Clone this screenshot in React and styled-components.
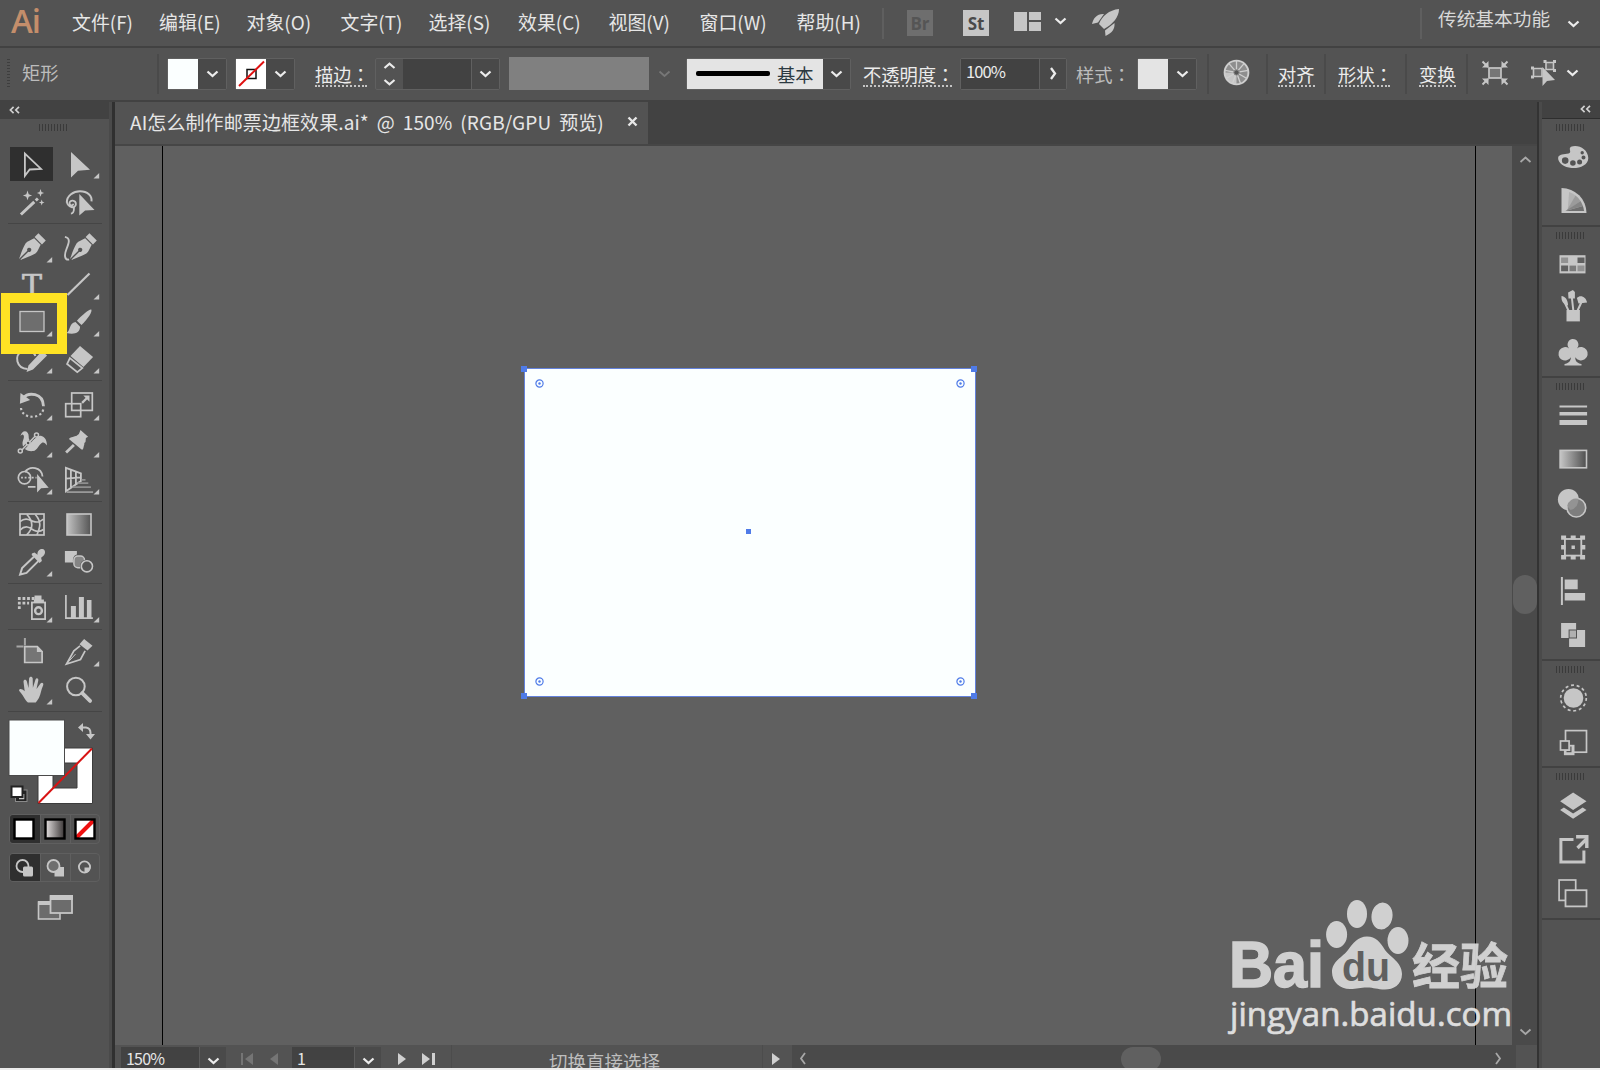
import React from "react";
import styled, { css, createGlobalStyle } from "styled-components";

const ink = "#c6c6c6";
const chrome = "#535353";
const dark = "#424242";
const blue = "#4f7be8";

const GlobalStyle = createGlobalStyle`
  * {
    box-sizing: border-box;
  }

  html, body, #root {
    margin: 0;
    padding: 0;
  }

  body {
    background: #ececec;
    font-family: "Noto Sans CJK SC", sans-serif;
    overflow: hidden;
  }

  svg {
    display: block;
    flex: none;
  }
`;

const Window = styled.div`
  position: relative;
  display: flex;
  flex-direction: column;
  width: 1600px;
  height: 1068px;
  overflow: hidden;
  background: ${chrome};
  color: #e6e6e6;
`;

/* menu bar */

const MenuBar = styled.div`
  display: flex;
  height: 48px;
  flex: none;
  border-bottom: 2px solid ${dark};
`;

const Logo = styled.div`
  width: 60px;
  padding-left: 11px;
  font: 600 33px/42px "Open Sans", sans-serif;
  letter-spacing: -1px;
  color: #c48e6b;
`;

const Menu = styled.div`
  display: flex;
  width: 822px;
  padding-left: 12px;
`;

const MenuItem = styled.div`
  width: ${(p) => p.$width}px;
  flex: none;
  font-size: 18.9px;
  line-height: 43px;
  white-space: nowrap;
`;

const MenuRule = styled.div`
  width: 2px;
  height: 31px;
  margin-top: 8px;
  background: #5f5f5f;
`;

const AppBadge = styled.div`
  width: 26px;
  height: 26px;
  margin: 10px 0 0 ${(p) => p.$gap}px;
  background: ${(p) => (p.$off ? "#6e6e6e" : "#c6c6c6")};
  color: ${(p) => (p.$off ? "#555" : "#4a4a4a")};
  font: 700 17px/27px "Open Sans", sans-serif;
  text-align: center;
`;

const MenuIcon = styled.div`
  margin: ${(p) => p.$top}px 0 0 ${(p) => p.$gap}px;
`;

const Workspace = styled.div`
  width: 130px;
  margin-left: 16px;
  font-size: 18.7px;
  line-height: 36px;
  white-space: nowrap;
  color: #d8d8d8;
`;

/* control bar */

const OptionsBar = styled.div`
  display: flex;
  align-items: center;
  height: 54px;
  flex: none;
  border-bottom: 2px solid ${dark};
`;

const SideGrip = styled.div`
  width: 3px;
  height: 30px;
  margin-left: 7px;
  background: repeating-linear-gradient(#3e3e3e 0 1px, #535353 1px 3px);
`;

const Label = styled.div`
  margin-left: ${(p) => p.$gap}px;
  width: ${(p) => p.$width}px;
  flex: none;
  height: 25px;
  margin-bottom: ${(p) => p.$raise || 0}px;
  font-size: 18.3px;
  line-height: 24px;
  white-space: nowrap;
  color: ${(p) => (p.$dim ? "#bcbcbc" : "#ececec")};
  ${(p) =>
    p.$link &&
    css`
      border-bottom: 2px dotted #c4c4c4;
    `}
`;

const Colon = styled.span`
  font-family: "Noto Sans CJK TC", sans-serif;
`;

const Rule = styled.div`
  width: 2px;
  height: 40px;
  flex: none;
  margin-left: ${(p) => p.$gap}px;
  background: #4a4a4a;
`;

const Control = styled.div`
  display: flex;
  height: 32px;
  flex: none;
  margin-left: ${(p) => p.$gap}px;
  margin-bottom: 1px;
  border: 1px solid ${(p) => (p.$plain ? "transparent" : "#606060")};
  border-radius: 2px;
`;

const Swatch = styled.div`
  width: 30px;
  height: 30px;
  background: ${(p) => p.$fill};
`;

const Arrow = styled.div`
  display: flex;
  align-items: center;
  justify-content: center;
  width: ${(p) => p.$width || 28}px;
  background: ${(p) => (p.$plain ? "transparent" : "#494949")};
  border-left: ${(p) => (p.$line ? "1px solid #606060" : "none")};
`;

const Field = styled.div`
  width: ${(p) => p.$width}px;
  padding-left: 5px;
  background: ${dark};
  font-size: 16.5px;
  line-height: 25px;
  letter-spacing: -0.9px;
  color: #ececec;
`;

const Profile = styled.div`
  width: 140px;
  height: 33px;
  margin-left: 9px;
  margin-bottom: 1px;
  background: #808080;
`;

const Brush = styled.div`
  display: flex;
  align-items: center;
  gap: 7px;
  width: 136px;
  padding-left: 9px;
  background: #e4e4e4;
  color: #2c3a42;
  font-size: 18.3px;
  white-space: nowrap;
`;

const BrushStroke = styled.div`
  width: 74px;
  height: 5px;
  border-radius: 2px;
  background: #000;
`;

/* panels */

const Body = styled.div`
  display: flex;
  flex: 1;
  min-height: 0;
`;

const ToolPanel = styled.div`
  width: 109px;
  flex: none;
`;

const PanelHead = styled.div`
  display: flex;
  align-items: center;
  height: 17px;
  padding: 0 9px 2px;
  justify-content: ${(p) => (p.$right ? "flex-end" : "flex-start")};
  border-bottom: ${(p) => (p.$right ? "1px solid #2e2e2e" : "none")};
  background: ${dark};
`;

const Grip = styled.div`
  width: 30px;
  height: 7px;
  margin: ${(p) => p.$margin};
  background: repeating-linear-gradient(90deg, #3a3a3a 0 1px, #535353 1px 3px);
`;

const Gutter = styled.div`
  width: ${(p) => (p.$right ? 5 : 6)}px;
  flex: none;
  background: #4a4a4a;
  ${(p) =>
    p.$right
      ? css`
          border-left: 2px solid #333;
        `
      : css`
          border-right: 3px solid #303030;
        `}
`;

const ToolGroup = styled.div`
  display: grid;
  grid-template-columns: 47px 47px;
  grid-auto-rows: 37px;
  row-gap: ${(p) => p.$rowGap || 0}px;
  width: 94px;
  height: ${(p) => p.$height}px;
  margin-left: 8px;
  padding-top: ${(p) => p.$top}px;
  border-bottom: 1px solid #454545;
`;

const Tool = styled.div`
  width: 47px;
  height: 37px;
  background: ${(p) =>
    p.$active
      ? "linear-gradient(#2f2f2f, #2f2f2f) 2px 2px / 43px 34px no-repeat"
      : "none"};
`;

const ToolMark = styled.div`
  position: absolute;
  left: 1px;
  top: 293px;
  width: 66px;
  height: 61px;
  border: 10px solid #ffe324;
  border-left-width: 9px;
`;

const ButtonRow = styled.div`
  display: flex;
  width: 91px;
  height: ${(p) => p.$height}px;
  margin: ${(p) => p.$top}px 0 0 9px;
  border: 1px solid #5f5f5f;
  border-radius: 4px;
  overflow: hidden;
`;

const ModeButton = styled.div`
  display: flex;
  align-items: center;
  justify-content: center;
  flex: 1;
  padding-right: ${(p) => (p.$active ? 2 : 0)}px;
  background: ${(p) => (p.$active ? "#2f2f2f" : "transparent")};

  & + & {
    border-left: 1px solid #5f5f5f;
  }
`;

const ScreenMode = styled.div`
  margin: 12px 0 0 37px;
`;

/* document */

const Main = styled.div`
  display: flex;
  flex-direction: column;
  width: 1422px;
  flex: none;
`;

const TabBar = styled.div`
  display: flex;
  height: 44px;
  flex: none;
  background: ${dark};
  border-bottom: 2px solid #464646;
`;

const Tab = styled.div`
  display: flex;
  align-items: center;
  width: 533px;
  padding: 0 10px 3px 15px;
  justify-content: space-between;
  background: ${chrome};
  font-size: 19px;
  letter-spacing: 0.1px;
  word-spacing: 3.6px;
  white-space: pre;
`;

const CanvasRow = styled.div`
  display: flex;
  flex: 1;
  min-height: 0;
`;

const Canvas = styled.div`
  position: relative;
  width: 1397px;
  padding: 0 36px 0 47px;
  background: #606060;
`;

const Artboard = styled.div`
  height: 100%;
  border: solid #000;
  border-width: 0 1px;
`;

const Shape = styled.div`
  position: absolute;
  left: 409px;
  top: 222px;
  width: 452px;
  height: 329px;
  border: 1px solid #6482dc;
  background: #fbffff;
`;

const Anchor = styled.div`
  position: absolute;
  left: ${(p) => p.$x}px;
  top: ${(p) => p.$y}px;
  width: ${(p) => p.$size || 6}px;
  height: ${(p) => p.$size || 6}px;
  background: ${blue};
`;

const CornerWidget = styled.svg`
  position: absolute;
  left: ${(p) => p.$x}px;
  top: ${(p) => p.$y}px;
`;

const Watermark = styled.svg`
  position: absolute;
  left: 1105px;
  top: 744px;
  opacity: 0.94;
`;

const VScroll = styled.div`
  display: flex;
  flex-direction: column;
  align-items: center;
  justify-content: space-between;
  width: 25px;
  padding: 10px 0 9px 1px;
  background: #4a4a4a;
`;

const VThumb = styled.div`
  width: 24px;
  height: 39px;
  margin-top: -4px;
  border-radius: 12px;
  background: #606060;
`;

const StatusBar = styled.div`
  display: flex;
  height: 23px;
  flex: none;
`;

const StatusField = styled.div`
  width: ${(p) => p.$width}px;
  height: 23px;
  margin: 2px 0 0 ${(p) => p.$gap}px;
  padding-left: 5px;
  background: ${dark};
  font-size: 16px;
  line-height: 23px;
  letter-spacing: -0.8px;
`;

const StatusArrow = styled.div`
  display: flex;
  justify-content: center;
  width: 27px;
  margin-top: 2px;
  padding-top: 10px;
  background: #4a4a4a;
  border-left: 1px solid #5c5c5c;
`;

const StatusNav = styled.div`
  margin: 7px 0 0 ${(p) => p.$gap}px;
`;

const StatusText = styled.div`
  width: 312px;
  margin-left: 15px;
  padding: 2px 5px 0 0;
  border: solid #4c4c4c;
  border-width: 0 1px;
  font-size: 18.5px;
  line-height: 28px;
  text-align: center;
  white-space: nowrap;
  color: #bdbdbd;
`;

const HScroll = styled.div`
  display: flex;
  align-items: center;
  justify-content: space-between;
  width: 724px;
  margin-left: 9px;
  padding: 3px 14px 0 7px;
  background: #4a4a4a;
`;

const HThumb = styled.div`
  width: 40px;
  height: 24px;
  margin-top: 2px;
  margin-left: -20px;
  border-radius: 12px;
  background: #606060;
`;

/* right dock */

const Dock = styled.div`
  flex: 1;
`;

const DockGroup = styled.div`
  height: ${(p) => p.$height}px;
  padding: 5px 0 0 8px;
  border-bottom: 2px solid #424242;
`;

const chevrons = {
  down: "M1.5 1.5L6.5 6L11.5 1.5",
  up: "M1.5 6L6.5 1.5L11.5 6",
};

const Chevron = ({ dir = "down", color = "#ececec", thick = 2.3 }) => (
  <svg width="13" height="8" viewBox="0 0 13 8">
    <path d={chevrons[dir]} fill="none" stroke={color} strokeWidth={thick} />
  </svg>
);

const SideChevron = ({ left, color = "#ececec", thick = 2.3 }) => (
  <svg width="8" height="13" viewBox="0 0 8 13">
    <path
      d={left ? "M6 1L2 6.5L6 12" : "M2 1L6 6.5L2 12"}
      fill="none"
      stroke={color}
      strokeWidth={thick}
    />
  </svg>
);

const DoubleChevron = () => (
  <svg width="11" height="8" viewBox="0 0 11 8">
    <path
      d="M4.6 .8L1.4 4L4.6 7.2M10 .8L6.8 4L10 7.2"
      fill="none"
      stroke="#d0d0d0"
      strokeWidth="1.7"
    />
  </svg>
);

// All tool and dock icons are drawn around their own centre.
const Glyph = ({ h = 37, fly, children }) => (
  <svg width="47" height={h} viewBox={`-23.5 ${-h / 2} 47 ${h}`} fill={ink}>
    {children}
    {fly && <path d="M20.7 9.5V15H15z" />}
  </svg>
);

const Line = (props) => (
  <path fill="none" stroke={ink} strokeWidth="1.6" {...props} />
);

const penBody = (
  <g transform="rotate(45)">
    <path d="M-5.2 -15H5.2V-9.6H-5.2z" />
    <path d="M-4.6 -8.4H4.6C5.6 -4.5 7.4 -2 7 1.5C5.5 7.5 2.8 12 .7 17V5.2A2.1 2.1 0 1 0 -.7 5.2V17C-2.8 12 -5.5 7.5 -7 1.5C-7.4 -2 -5.6 -4.5 -4.6 -8.4z" />
  </g>
);

const icons = {
  select: <Line d="M-6.6 -10V12.3L-1.8 6L9.5 5.4z" strokeWidth="1.8" />,
  direct: <path d="M-7.5 -11.5V14L-.5 7.3L11.5 6.2z" />,
  wand: (
    <>
      <Line d="M-10.6 12L2.8 -.6M4.2 -2L6.4 -4" strokeWidth="3" />
      <path d="M-4 -12L-2.8 -8.3L.6 -7L-2.8 -5.8L-4 -2.2L-5.2 -5.8L-8.6 -7L-5.2 -8.3z" />
      <path d="M9 -13.4L10 -10.6L12.6 -9.6L10 -8.6L9 -5.8L8 -8.6L5.4 -9.6L8 -10.6z" />
      <path d="M10.2 -3L11 -.8L13 0L11 .8L10.2 3L9.4 .8L7.4 0L9.4 -.8z" />
    </>
  ),
  lasso: (
    <>
      <Line d="M-11.7 0C-11.7 -7 -5 -11.3 1.5 -11.3C9 -11.3 13.8 -6.8 13 -1.2" strokeWidth="2" />
      <Line d="M-11.7 -1C-11 5 -3 7 -2.6 1.6C-2.6 -2.8 -9 -2.8 -9 .6C-9 3.6 -5.3 3.6 -5.3 1.2M-4.5 5C-4.8 8 -4 11 -7.6 11" strokeWidth="1.8" />
      <path d="M.8 -8.6V13L6.6 8L16 7.4z" />
    </>
  ),
  pen: penBody,
  curve: (
    <>
      <g transform="translate(4 0)">{penBody}</g>
      <Line d="M-13.6 -10.6C-7.5 -9.5 -9.8 -4 -12 1.5C-14.6 8 -13.8 12.8 -9.4 12" strokeWidth="1.9" />
    </>
  ),
  type: (
    <text x=".5" y="11" fontFamily="DejaVu Serif" fontSize="30" textAnchor="middle" stroke={ink} strokeWidth=".7">
      T
    </text>
  ),
  line: <Line d="M-11 10.5L11 -11" strokeWidth="2.2" />,
  rect: <rect x="-11.5" y="-10" width="24" height="20" fill="#6e6e6e" stroke={ink} strokeWidth="1.3" />,
  brush: (
    <>
      <path d="M12.8 -12C14 -10 10 -3.5 3 3.5L-1.6 -.8C4 -7 11 -12.8 12.8 -12z" />
      <path d="M-3 .6L1.6 5.2C1.5 11 -4 13.6 -12 11.4C-8 10 -10 2 -3 .6z" />
    </>
  ),
  shaper: (
    <>
      <Line d="M-4 10.5C-15 10 -18 -3 -9.5 -7.5C-4.5 -9 3 -7 3.8 -2.5" strokeWidth="2" />
      <path d="M10.5 -7.6L15.6 -3L1.5 11L-5 13.6L-3 7z" />
    </>
  ),
  eraser: (
    <>
      <path d="M1.5 -12.6L14.6 -1.4L5 8.4L-8 -2.4z" />
      <Line d="M-8.6 -.4L3.8 9.6L-1.2 13.6L-11.4 5.4z" strokeWidth="1.8" />
    </>
  ),
  rotate: (
    <>
      <Line d="M-8.5 -7.5C-3 -13.5 11.5 -13 12 .8" strokeWidth="2.8" />
      <path d="M-11 -12.4L-11.6 -1.8L-1.4 -5.6z" />
      <Line d="M-10.5 2.5C-9.5 14 10.5 14 11.8 3.5" strokeWidth="2.2" strokeDasharray="2.2 2.4" />
    </>
  ),
  scale: (
    <>
      <rect x="-6.8" y="-12.5" width="20.6" height="17.4" fill="none" stroke={ink} strokeWidth="1.7" />
      <rect x="-12.8" y="-1.8" width="15" height="13" fill="none" stroke={ink} strokeWidth="1.7" />
      <Line d="M3.6 -2.6L9 -8" strokeWidth="2.2" />
      <path d="M4.8 -10H11V-3.8z" />
    </>
  ),
  width: (
    <>
      <path d="M-11 -6.4C-9.6 -13.5 -2.6 -12.6 -2.8 -6C-3 -3.6 -2 -2 0 -2C2 -2 6 -7.8 10 -6.6C13.6 -5.6 15.6 -2 15.4 3C13.6 .2 12 -.6 10.2 .4C7 2.4 6 7.8 1.6 8.6C-3.5 9.4 -9 6.6 -9 1C-9 -2 -6.6 -5 -8 -7.2C-8.8 -8.4 -10 -8 -11 -6.4z" />
      <path d="M-10.5 8.4L4.8 -8" stroke={chrome} strokeWidth="3" />
      <Line d="M-9.6 7.4L3.8 -6.6" strokeWidth="1.5" />
      <circle cx="-11.2" cy="8.6" r="2" fill={chrome} stroke={ink} strokeWidth="1.5" />
      <circle cx="5" cy="-7.6" r="2" fill={chrome} stroke={ink} strokeWidth="1.5" />
      <circle cx="-3.4" cy=".6" r="2" fill={chrome} stroke={ink} strokeWidth="1.5" />
    </>
  ),
  pin: (
    <>
      <path d="M2 -12.6L9.6 -5.8L7.4 -4.6L7 -.6L4.6 1.6V6L-8.8 -4.6L-3.6 -5.4L.4 -8.6z" />
      <path d="M-8.6 -4.4L-3 -6.6L6 1L4.4 7L3 7L-9.6 -3.4z" />
      <Line d="M-4.6 2.6L-12.4 10" strokeWidth="2.8" />
    </>
  ),
  builder: (
    <>
      <circle cx="-7" cy="-1.8" r="6.2" fill="none" stroke={ink} strokeWidth="1.7" />
      <Line d="M-6.6 -7.4C-2 -14 10 -13 11 -3M-3.6 7.4H4" strokeWidth="1.8" />
      <Line d="M-10.4 -1.8H5" strokeWidth="1.8" strokeDasharray="1.8 1.8" />
      <path d="M5.6 -5.4V13L9.6 8.8L17.2 8.2z" />
    </>
  ),
  perspective: (
    <>
      <Line d="M-12.6 -11.6V11.8L2.4 1.6V-6.2zM-7.6 -9.6V7.6M-2.6 -8V4.8M-12.6 -.8L2.4 -2.2" strokeWidth="1.8" />
      <Line d="M3 .4H7M-1 3.6H9.8M-6 7.6H12.4" stroke="#8f8f8f" />
      <Line d="M-12 12.6H14.6" stroke="#a2a2a2" />
    </>
  ),
  mesh: (
    <>
      <rect x="-11.5" y="-10.5" width="24" height="21" fill="none" stroke={ink} strokeWidth="1.7" />
      <Line d="M-4.6 -10C2 -3 2 4 -5 10.5M3.8 -10C11 -2 8 4 5.4 10.5M-11.5 -3C-6 -7 -3 -5 1 -3.4C5 -2 7 -1.8 12 -5.4M-11.5 5.6C-5 -1 0 4.6 3 6C6 7.4 9 7 12 5" strokeWidth="1.7" />
    </>
  ),
  gradient: (
    <>
      <defs>
        <linearGradient id="toolFade">
          <stop offset="0" stopColor="#c2c2c2" />
          <stop offset="1" stopColor="#545454" />
        </linearGradient>
      </defs>
      <rect x="-11.5" y="-10.5" width="24" height="21" fill="url(#toolFade)" stroke={ink} strokeWidth="1.6" />
    </>
  ),
  dropper: (
    <>
      <Line d="M2.4 -4.8L-9.4 6.6L-11.4 13L-5 11.4L6.8 -.4" strokeWidth="2" />
      <path d="M.4 -8L3 -9L6 -6.8C5.6 -10 8 -12.8 11 -12.4C14 -11.8 14.4 -8 12 -5.8L9.6 -3.8L10.4 -.4L8 1.4L.2 -6.4z" />
    </>
  ),
  blend: (
    <>
      <path d="M-13.6 -10.6H-1.6V-7C-5 -6 -6 -3 -5.4 1H-13.6z" />
      <rect x="-4.6" y="-5.4" width="10.6" height="11.6" rx="4" fill="#858585" stroke={ink} strokeWidth="1.5" />
      <circle cx="8.4" cy="4.8" r="6.9" fill={chrome} />
      <circle cx="8.4" cy="4.8" r="5.6" fill="none" stroke={ink} strokeWidth="1.6" />
    </>
  ),
  spray: (
    <>
      <rect x=".4" y="-5" width="13.2" height="16.6" fill="none" stroke={ink} strokeWidth="1.8" />
      <path d="M3 -12H10V-8H12.4V-5H2.4V-8H3z" />
      <circle cx="7" cy="3.2" r="3.4" fill="none" stroke={ink} strokeWidth="2.4" />
      <path d="M-13.6 -10.4h2.8v2.8h-2.8zM-9 -10.4h2.8v2.8h-2.8zM-4.4 -10.4h2.8v2.8h-2.8zM.2 -10.4h2.8v2.8h-2.8zM-13.6 -5.8h2.8v2.8h-2.8zM-9 -5.8h2.8v2.8h-2.8zM-4.4 -5.8h2v2.8h-2zM-13.6 -1.2h2.8v2.8h-2.8z" />
    </>
  ),
  graph: (
    <>
      <Line d="M-12.6 -12.4V10.6H14.4" strokeWidth="1.7" />
      <path d="M-7.6 -1.4h5v12h-5zM.4 -10.4h5v21h-5zM8.4 -7.4h4.6v18h-4.6z" />
    </>
  ),
  artboard: (
    <>
      <path d="M-6.8 -4.8H5.8L10.6 .2V11H-6.8z" fill="#757575" stroke={ink} strokeWidth="1.7" />
      <path d="M5.4 -5.4V.6H11.4z" />
      <Line d="M-6.6 -13.4V-6M-15 -5H-8" stroke="#a6a6a6" strokeWidth="2" />
    </>
  ),
  slice: (
    <>
      <path d="M5.6 -12.6L14 -5.8L9 -1L1 -7.2z" />
      <Line d="M1.6 -5.6L-4.6 -.6L-12 12.6L2 8L6.6 -.6" strokeWidth="1.7" />
      <Line d="M-12.4 12.8L-3 2.6" strokeWidth="1" />
    </>
  ),
  hand: (
    <path d="M-3.6 13C-6.4 10.6 -9 4.6 -12.4 1.2C-12.6 -1.4 -9.6 -1.2 -6.8 1.8L-8 -7.8C-8 -10.4 -5.2 -10.4 -4.6 -8L-3 -1.6L-2.4 -11C-2 -13.2 .8 -13.2 1.2 -11L1.4 -1.8L4 -10C4.8 -12 7.2 -11.2 6.8 -9L5 -.4L9 -6C10.6 -7.6 12.6 -6.2 11.6 -4C9.4 .6 9.6 4 7.4 8.6C6 11 5 12 4.2 13z" />
  ),
  zoom: (
    <>
      <circle cx="-2.6" cy="-3" r="8.8" fill="none" stroke={ink} strokeWidth="2" />
      <Line d="M3.8 3.6L11.6 11.4" strokeWidth="3.8" strokeLinecap="round" />
    </>
  ),
};

const toolGroups = [
  { height: 79, top: 0, rowGap: 2, tools: [["select"], ["direct", 1], ["wand"], ["lasso"]] },
  {
    height: 157,
    top: 5,
    tools: [["pen", 1], ["curve"], ["type"], ["line", 1], ["rect", 1], ["brush", 1], ["shaper", 1], ["eraser", 1]],
  },
  {
    height: 121,
    top: 6,
    tools: [["rotate", 1], ["scale", 1], ["width", 1], ["pin", 1], ["builder", 1], ["perspective", 1]],
  },
  { height: 82, top: 4, tools: [["mesh"], ["gradient"], ["dropper", 1], ["blend"]] },
  { height: 46, top: 5, tools: [["spray", 1], ["graph", 1]] },
  { height: 82, top: 3, rowGap: 1, tools: [["artboard"], ["slice", 1], ["hand", 1], ["zoom"]] },
];

const dockIcons = {
  palette: (
    <path
      fillRule="evenodd"
      d="M-15.4 1C-15 -3 -9 -2.6 -5 -3.4C-1 -4.6 -5.6 -8 -2.6 -10.2C4 -13 14.4 -8.6 14.8 1C14.6 8.4 6 11.6 -2 11C-9 10.4 -15.6 6 -15.4 1zM-11.6 3.6a3.3 3.3 0 1 0 6.6 0a3.3 3.3 0 1 0 -6.6 0zM-3.4 6a2.8 2.8 0 1 0 5.6 0a2.8 2.8 0 1 0 -5.6 0zM3.6 5a2.5 2.5 0 1 0 5 0a2.5 2.5 0 1 0 -5 0zM8 .6a2 2 0 1 0 4 0a2 2 0 1 0 -4 0zM7 -4.2a1.7 1.7 0 1 0 3.4 0a1.7 1.7 0 1 0 -3.4 0z"
    />
  ),
  guide: (
    <>
      <path d="M-12 -13A25 25 0 0 1 13 12H-12z" />
      <path d="M-5.8 9.4L-4.4 -9A22 22 0 0 1 2 -5.4z" fill="#b2b2b2" />
      <path d="M-7 10L2 -5.4A20 20 0 0 1 7 0z" fill="#9b9b9b" />
      <path d="M-8 10L7 0A20 20 0 0 1 9.4 5z" fill="#858585" />
      <path d="M-8 10L9.4 5A20 20 0 0 1 10.6 10z" fill="#6e6e6e" />
    </>
  ),
  swatches: (
    <>
      <path d="M-14 -8.8H12V9.4H-14z" />
      <path d="M-12.4 -6.6h7v5.6h-7zM4 1.6h7v5.6h-7z" fill="#929292" />
      <path d="M4 -6.6h7v5.6h-7zM-12.4 1.6h7v5.6h-7z" fill="#606060" />
      <path d="M-4 1.6h6.6v5.6h-6.6z" fill="#7a7a7a" />
    </>
  ),
  brushes: (
    <>
      <path d="M-7 2H6.4V13.4H-7z" />
      <Line d="M-9 -6L-4.4 4M-1.6 -10L0 4M8 -6L3.4 4" strokeWidth="2" />
      <path d="M-12 -12C-8 -11.6 -5.6 -8 -5.4 -2.6C-9 -3 -12.6 -6 -12 -12zM-5.4 -15.6L-.6 -18L1.4 -16V-9.4H-5zM3.4 -10C7 -13.6 12.6 -11 13.6 -5.4L5 -4.6z" />
    </>
  ),
  club: (
    <path d="M-.8 -13A5.6 5.6 0 0 1 3.4 -3.6A6.7 6.7 0 1 1 1.8 5.2C1.6 9.6 4 11 8 12V13.4H-9V12C-5 11 -2.8 9.6 -2.6 5.2A6.7 6.7 0 1 1 -4.4 -3.6A5.6 5.6 0 0 1 -.8 -13z" />
  ),
  stroke: <path d="M-14 -9.6h27.6v2.2h-27.6zM-14 -3h27.6v3.4h-27.6zM-14 5h27.6v5h-27.6z" />,
  gradient: (
    <>
      <defs>
        <linearGradient id="dockFade">
          <stop offset="0" stopColor="#c6c6c6" />
          <stop offset="1" stopColor="#4e4e4e" />
        </linearGradient>
      </defs>
      <rect x="-13.4" y="-8.6" width="26.4" height="17.4" fill="url(#dockFade)" stroke={ink} strokeWidth="1.6" />
    </>
  ),
  transparency: (
    <>
      <circle cx="-5" cy="-3.4" r="10.6" />
      <circle cx="2.8" cy="4.6" r="9.4" fill="#7e7e7e" stroke={ink} strokeWidth="1.6" />
      <path d="M-6.3 3A9 9 0 0 1 4.8 -4.2A10 10 0 0 1 -3 7z" fill="#939393" />
    </>
  ),
  transform: (
    <>
      <rect x="-8.6" y="-8" width="16.4" height="16.6" fill="none" stroke={ink} strokeWidth="1.8" />
      <path d="M-12.4 -11.6h5v4.4h-5zM-2.8 -11.6h5v4h-5zM6.6 -11.6h5v4.4h-5zM-12.4 -2h4.4v4.6h-4.4zM7.4 -2h4.4v4.6h-4.4zM-12.4 8h5v4.4h-5zM-2.8 8.4h5v4h-5zM6.6 8h5v4.4h-5zM-2 -1.4h3.4v3.4h-3.4z" />
    </>
  ),
  align: <path d="M-12.6 -14h2v28h-2zM-8.8 -11.4h13v9.6h-13zM-8.8 2h20.4v7.6h-20.4z" />,
  pathfinder: (
    <>
      <path d="M-12.4 -12H2.6V-5H11.6V12H-4.4V3H-12.4z" />
      <rect x="-4.4" y="-5" width="7.4" height="8" fill="#b0b0b0" stroke={chrome} strokeWidth="1" />
    </>
  ),
  appearance: (
    <>
      <circle cx="0" cy="-1" r="9.8" />
      <circle cx="0" cy="-1" r="12.8" fill="none" stroke={ink} strokeWidth="1.7" strokeDasharray="3 2.74" />
    </>
  ),
  styles: (
    <>
      <rect x="-8" y="-12.4" width="21" height="21.6" fill="none" stroke={ink} strokeWidth="1.7" />
      <path d="M-9.6 1.8H1V12.2H-9.6z" />
      <rect x="-13" y="-2" width="8.6" height="9" fill={chrome} stroke={ink} strokeWidth="1.7" />
      <Line d="M-7 8.6H-2.6V3.6" stroke={chrome} strokeWidth="1.2" />
    </>
  ),
  layers: (
    <>
      <path d="M-.4 -13.6L13 -4.8L-.4 4L-13.4 -4.8z" />
      <path d="M-13.4 4L-9.6 1.6L-.4 7.6L9.2 1.6L13 4L-.4 12.8z" />
    </>
  ),
  exporter: (
    <>
      <Line d="M0 -10.6H-12.6V12H10.4V.6" strokeWidth="3" />
      <Line d="M4 -2L13 -11" strokeWidth="3.4" />
      <path d="M2.6 -15H15V-2H11.6V-11.6H2.6z" />
    </>
  ),
  artboards: (
    <>
      <rect x="-14.4" y="-14" width="16.6" height="20.4" fill="none" stroke={ink} strokeWidth="1.7" />
      <rect x="-8" y="-3.8" width="21" height="16.2" fill={chrome} stroke={ink} strokeWidth="1.8" />
    </>
  ),
};

const dockGroups = [
  { height: 108, gap: 4, items: ["palette", "guide"] },
  { height: 151, gap: 3, items: ["swatches", "brushes", "club"] },
  { height: 283, gap: 3, items: ["stroke", "gradient", "transparency", "transform", "align", "pathfinder"] },
  { height: 107, gap: 4, items: ["appearance", "styles"] },
  { height: 152, gap: 4, items: ["layers", "exporter", "artboards"] },
];

const menus = [
  ["文件(F)", 87],
  ["编辑(E)", 87.5],
  ["对象(O)", 94],
  ["文字(T)", 88],
  ["选择(S)", 89.5],
  ["效果(C)", 90.5],
  ["视图(V)", 91],
  ["窗口(W)", 97],
  ["帮助(H)", 70],
];

const FillStroke = () => (
  <svg width="102" height="96" viewBox="0 712 102 96">
    <path d="M38 748H92.5V803.5H38zM53 763V788H77V763z" fill="#fff" fillRule="evenodd" stroke="#3c3c3c" />
    <path d="M38.5 803L92 748.5" stroke="#d81414" strokeWidth="2" />
    <rect x="9" y="720" width="55.5" height="55.5" fill="#fbffff" stroke="#4a4a4a" />
    <path d="M82 727.5H86Q90.5 728 90.5 733V736" fill="none" stroke={ink} strokeWidth="2" />
    <path d="M78 727.5L83 723V732zM86 734H95L90.5 739.5z" fill={ink} />
    <rect x="15.5" y="790" width="11.5" height="11.5" fill="#222" stroke="#8a8a8a" />
    <path d="M19 798.5H23.5V794" fill="none" stroke={ink} strokeWidth="1.6" />
    <rect x="11.5" y="786.5" width="11" height="10.5" fill="#fff" stroke="#222" strokeWidth="2" />
  </svg>
);

const Chip = ({ kind }) => (
  <svg width="22" height="22" viewBox="0 0 22 22">
    <defs>
      <linearGradient id="chipFade">
        <stop offset="0" stopColor="#e4e0e0" />
        <stop offset="1" stopColor="#3a3636" />
      </linearGradient>
    </defs>
    <rect x="1.5" y="1.5" width="19" height="19" fill={kind === "fade" ? "url(#chipFade)" : "#fff"} />
    {kind === "none" && <path d="M2 20L20 2" stroke="#e11" strokeWidth="4" />}
    <rect x="1.5" y="1.5" width="19" height="19" fill="none" stroke="#000" strokeWidth="2.4" />
  </svg>
);

const DrawMode = ({ kind }) => (
  <svg width="20" height="20" viewBox="0 0 20 20" fill={ink}>
    {kind === "inside" ? (
      <>
        <path d="M9.5 9.5H15.5A6 6 0 0 1 9.5 15z" />
        <circle cx="9.5" cy="9" r="5.6" fill="none" stroke={ink} strokeWidth="1.8" />
      </>
    ) : (
      <>
        {kind === "behind" && <path d="M9.5 9H19V18.5H9.5z" />}
        <circle cx="8.5" cy="8" r="6" fill={kind === "behind" ? "#6e6e6e" : "none"} stroke={ink} strokeWidth="1.8" />
        {kind === "normal" && <rect x="9" y="8.5" width="10" height="10" rx="1.5" />}
      </>
    )}
  </svg>
);

const Tools = () => (
  <ToolPanel>
    <PanelHead>
      <DoubleChevron />
    </PanelHead>
    <Grip $margin="5px 0 14px 39px" />
    {toolGroups.map((group) => (
      <ToolGroup key={group.height + group.tools[0][0]} $height={group.height} $top={group.top} $rowGap={group.rowGap}>
        {group.tools.map(([name, fly]) => (
          <Tool key={name} $active={name === "select"}>
            <Glyph fly={fly}>{icons[name]}</Glyph>
          </Tool>
        ))}
      </ToolGroup>
    ))}
    <FillStroke />
    <ButtonRow $height={30} $top={6}>
      <ModeButton $active>
        <Chip kind="solid" />
      </ModeButton>
      <ModeButton>
        <Chip kind="fade" />
      </ModeButton>
      <ModeButton>
        <Chip kind="none" />
      </ModeButton>
    </ButtonRow>
    <ButtonRow $height={29} $top={9}>
      <ModeButton $active>
        <DrawMode kind="normal" />
      </ModeButton>
      <ModeButton>
        <DrawMode kind="behind" />
      </ModeButton>
      <ModeButton>
        <DrawMode kind="inside" />
      </ModeButton>
    </ButtonRow>
    <ScreenMode>
      <svg width="36" height="27" viewBox="0 0 36 27">
        <rect x="1.5" y="8" width="21.5" height="17" fill="#6c6c6c" stroke={ink} strokeWidth="1.6" />
        <path d="M1 7H14V11H1z" fill={ink} />
        <rect x="13.5" y="2" width="21.5" height="17" fill="#6c6c6c" stroke={ink} strokeWidth="1.8" />
        <path d="M13 1H36V6H13z" fill={ink} />
      </svg>
    </ScreenMode>
  </ToolPanel>
);

const BaiduMark = () => (
  <Watermark width="300" height="150" viewBox="1220 890 300 150" fill="#d8d8d8">
    <text
      x="1229"
      y="987"
      fontFamily="Liberation Sans"
      fontWeight="bold"
      fontSize="64"
      stroke="#d8d8d8"
      strokeWidth="1.6"
      textLength="95"
      lengthAdjust="spacingAndGlyphs"
    >
      Bai
    </text>
    <ellipse cx="1336.6" cy="934.5" rx="10.5" ry="13.5" />
    <ellipse cx="1357" cy="914" rx="10" ry="14" />
    <ellipse cx="1382" cy="916" rx="10.5" ry="13.5" transform="rotate(8 1382 916)" />
    <ellipse cx="1398" cy="940.5" rx="10.5" ry="13.5" />
    <path d="M1367 936.5C1376 936.5 1380 942 1385 950C1390 957 1402 962 1402 974C1402 985 1393 989.5 1385 989.5C1377 989.5 1374 987.5 1367 987.5C1360 987.5 1357 989 1350 989C1340 989 1332 982 1332 972C1332 961 1343 957 1348 950C1353 943 1358 936.5 1367 936.5z" />
    <text x="1342" y="981" fontFamily="Liberation Sans" fontWeight="bold" fontSize="40" textLength="48" lengthAdjust="spacingAndGlyphs" fill="#606060">
      du
    </text>
    <text
      x="1412"
      y="983.5"
      fontFamily="Noto Sans CJK SC"
      fontWeight="bold"
      fontSize="49"
      stroke="#d8d8d8"
      strokeWidth=".8"
      textLength="96"
      lengthAdjust="spacingAndGlyphs"
    >
      经验
    </text>
    <text x="1230" y="1026" fontFamily="Open Sans" fontSize="33" fill="#e6e6e6" stroke="#e6e6e6" strokeWidth=".7" textLength="282">
      jingyan.baidu.com
    </text>
  </Watermark>
);

const corners = [
  [419.5, 232.5],
  [840.5, 232.5],
  [419.5, 530.5],
  [840.5, 530.5],
];

const Document = () => (
  <Canvas>
    <Artboard />
    <Shape />
    <Anchor $x={406} $y={220} />
    <Anchor $x={856} $y={220} />
    <Anchor $x={406} $y={547} />
    <Anchor $x={856} $y={547} />
    <Anchor $x={631} $y={383} $size={5} />
    {corners.map(([x, y]) => (
      <CornerWidget key={`${x}-${y}`} $x={x} $y={y} width="9" height="9" viewBox="0 0 9 9">
        <circle cx="4.5" cy="4.5" r="3.6" fill="none" stroke={blue} strokeWidth="1.2" />
        <circle cx="4.5" cy="4.5" r="1.2" fill={blue} />
      </CornerWidget>
    ))}
    <BaiduMark />
  </Canvas>
);

const NavGlyph = ({ d, off }) => (
  <svg width="14" height="14" viewBox="0 0 14 14">
    <path d={d} fill={off ? "#757575" : "#d0d0d0"} />
  </svg>
);

const spokes = [0, 40, 80, 120, 160, 200, 240, 280, 320];

const Options = () => (
  <OptionsBar>
    <SideGrip />
    <Label $gap={12} $width={40} $raise={4} $dim>
      矩形
    </Label>
    <Rule $gap={95} />
    <Control $gap={8}>
      <Swatch $fill="#fbffff" />
      <Arrow>
        <Chevron />
      </Arrow>
    </Control>
    <Control $gap={8}>
      <Swatch $fill="#fff">
        <svg width="30" height="30" viewBox="0 0 30 30">
          <rect x="11" y="10.5" width="9" height="9" fill="none" stroke="#111" strokeWidth="1.5" />
          <path d="M3 27L28 2.5" stroke="#e01010" strokeWidth="2" />
        </svg>
      </Swatch>
      <Arrow>
        <Chevron />
      </Arrow>
    </Control>
    <Label $gap={20} $width={52} $link>
      描边<Colon>：</Colon>
    </Label>
    <Control $gap={8}>
      <Arrow $width={27} $plain>
        <svg width="13" height="24" viewBox="0 0 13 24">
          <path d="M1.5 6L6.5 1.7L11.5 6M1.5 18L6.5 22.3L11.5 18" fill="none" stroke="#ececec" strokeWidth="2.2" />
        </svg>
      </Arrow>
      <Field $width={68} />
      <Arrow $width={28} $line>
        <Chevron />
      </Arrow>
    </Control>
    <Profile />
    <Control $gap={0} $plain>
      <Arrow $plain $width={29}>
        <Chevron color="#777" thick={1.8} />
      </Arrow>
    </Control>
    <Control $gap={6}>
      <Brush>
        <BrushStroke />
        基本
      </Brush>
      <Arrow $width={27}>
        <Chevron />
      </Arrow>
    </Control>
    <Label $gap={12} $width={89} $link>
      不透明度<Colon>：</Colon>
    </Label>
    <Control $gap={8}>
      <Field $width={78}>100%</Field>
      <Arrow $width={27} $line>
        <SideChevron />
      </Arrow>
    </Control>
    <Label $gap={9} $width={54} $dim>
      样式<Colon>：</Colon>
    </Label>
    <Control $gap={7}>
      <Swatch $fill="#e4e4e4" />
      <Arrow>
        <Chevron />
      </Arrow>
    </Control>
    <Rule $gap={10} />
    <MenuIcon $top={-3} $gap={14}>
      <svg width="27" height="27" viewBox="-13.5 -13.5 27 27">
        <circle r="12" fill="#8e8e8e" />
        <path d="M0 0L-12 0A12 12 0 0 0 0 12z" fill="#c6c6c6" />
        {spokes.map((angle) => (
          <path key={angle} d="M0 -3V-12" stroke="#d0d0d0" strokeWidth="1.3" transform={`rotate(${angle})`} />
        ))}
        <circle r="11.9" fill="none" stroke="#cecece" strokeWidth="1.9" />
        <circle r="2.6" fill="#555" stroke="#8a8a8a" />
      </svg>
    </MenuIcon>
    <Rule $gap={16} />
    <Label $gap={10} $width={37} $link>
      对齐
    </Label>
    <Rule $gap={9} />
    <Label $gap={12} $width={52} $link>
      形状<Colon>：</Colon>
    </Label>
    <Rule $gap={15} />
    <Label $gap={12} $width={37} $link>
      变换
    </Label>
    <Rule $gap={10} />
    <MenuIcon $top={-2} $gap={13}>
      <svg width="28" height="26" viewBox="-14 -13 28 26" fill={ink}>
        <rect x="-6" y="-5" width="12" height="10" fill="#767676" stroke={ink} strokeWidth="1.7" />
        <path d="M-6.5 -12V-5.5H-13zM6.5 -12V-5.5H13zM-6.5 12V5.5H-13zM6.5 12V5.5H13z" />
        <path d="M-12.5 -11.5L-7 -6M12.5 -11.5L7 -6M-12.5 11.5L-7 6M12.5 11.5L7 6" stroke={ink} strokeWidth="2" />
      </svg>
    </MenuIcon>
    <MenuIcon $top={-2} $gap={22}>
      <svg width="26" height="28" viewBox="0 0 26 28" fill={ink}>
        <path d="M2.5 9.5H11V17.5H2.5z" fill="#6a6a6a" stroke={ink} strokeWidth="1.6" />
        <path d="M15 3.5H22.5V10.5H15z" fill="#6a6a6a" stroke={ink} strokeWidth="1.6" />
        <path d="M0 7.5h3v3h-3zM0 16.5h3v3h-3zM12.5 1h3v3h-3zM22 1h3v3h-3zM22 10h3v3h-3z" />
        <path d="M11.5 8V27L16 22L24 21z" />
      </svg>
    </MenuIcon>
    <MenuIcon $top={-3} $gap={9}>
      <Chevron />
    </MenuIcon>
  </OptionsBar>
);

const App = () => (
  <>
    <GlobalStyle />
    <Window>
      <MenuBar>
        <Logo>Ai</Logo>
        <Menu>
          {menus.map(([name, width]) => (
            <MenuItem key={name} $width={width}>
              {name}
            </MenuItem>
          ))}
        </Menu>
        <MenuRule />
        <AppBadge $off $gap={23}>
          Br
        </AppBadge>
        <AppBadge $gap={30}>St</AppBadge>
        <MenuIcon $top={12} $gap={25}>
          <svg width="27" height="19" viewBox="0 0 27 19" fill={ink}>
            <path d="M0 0H13V19H0zM15 0H27V8H15zM15 10H27V19H15z" />
          </svg>
        </MenuIcon>
        <MenuIcon $top={17} $gap={13}>
          <Chevron />
        </MenuIcon>
        <MenuIcon $top={9} $gap={25}>
          <svg width="27" height="27" viewBox="0 0 27 27" fill={ink}>
            <path d="M27 0C27 8 21 15 12 20L7 15C10 7 17 1 27 0z" />
            <path d="M12 5L6 13.5L0 15C1.5 9 5 4.5 12 5zM22.5 14C23 20 20 24 13.5 27L13 21.5z" />
          </svg>
        </MenuIcon>
        <MenuIcon $top={0} $gap={301}>
          <MenuRule />
        </MenuIcon>
        <Workspace>传统基本功能</Workspace>
        <MenuIcon $top={20} $gap={-1}>
          <Chevron />
        </MenuIcon>
      </MenuBar>
      <Options />
      <Body>
        <Tools />
        <Gutter />
        <Main>
          <TabBar>
            <Tab>
              {"AI怎么制作邮票边框效果.ai* @ 150% (RGB/GPU 预览)"}
              <svg width="11" height="11" viewBox="0 0 11 11">
                <path d="M1.5 1.5L9.5 9.5M9.5 1.5L1.5 9.5" stroke="#e8e8e8" strokeWidth="2.4" />
              </svg>
            </Tab>
          </TabBar>
          <CanvasRow>
            <Document />
            <VScroll>
              <Chevron dir="up" color="#a8a8a8" thick={1.8} />
              <VThumb />
              <Chevron color="#a8a8a8" thick={1.8} />
            </VScroll>
          </CanvasRow>
          <StatusBar>
            <StatusField $width={78} $gap={6}>
              150%
            </StatusField>
            <StatusArrow>
              <Chevron />
            </StatusArrow>
            <StatusNav $gap={14}>
              <NavGlyph off d="M1 1H3V13H1zM13 1V13L5 7z" />
            </StatusNav>
            <StatusNav $gap={13}>
              <NavGlyph off d="M11 1V13L3 7z" />
            </StatusNav>
            <StatusField $width={62} $gap={11}>
              1
            </StatusField>
            <StatusArrow>
              <Chevron />
            </StatusArrow>
            <StatusNav $gap={14}>
              <NavGlyph d="M3 1V13L11 7z" />
            </StatusNav>
            <StatusNav $gap={13}>
              <NavGlyph d="M0 1V13L8 7zM10 1H13V13H10z" />
            </StatusNav>
            <StatusText>切换直接选择</StatusText>
            <StatusNav $gap={6}>
              <NavGlyph d="M3 1V13L11 7z" />
            </StatusNav>
            <HScroll>
              <SideChevron left color="#a8a8a8" thick={1.8} />
              <HThumb />
              <SideChevron color="#a8a8a8" thick={1.8} />
            </HScroll>
          </StatusBar>
        </Main>
        <Gutter $right />
        <Dock>
          <PanelHead $right>
            <DoubleChevron />
          </PanelHead>
          {dockGroups.map((group) => (
            <DockGroup key={group.items[0]} $height={group.height}>
              <Grip $margin={`0 0 ${group.gap}px 6px`} />
              {group.items.map((name) => (
                <Glyph key={name} h={44}>
                  {dockIcons[name]}
                </Glyph>
              ))}
            </DockGroup>
          ))}
        </Dock>
      </Body>
      <ToolMark />
    </Window>
  </>
);

export default App;
